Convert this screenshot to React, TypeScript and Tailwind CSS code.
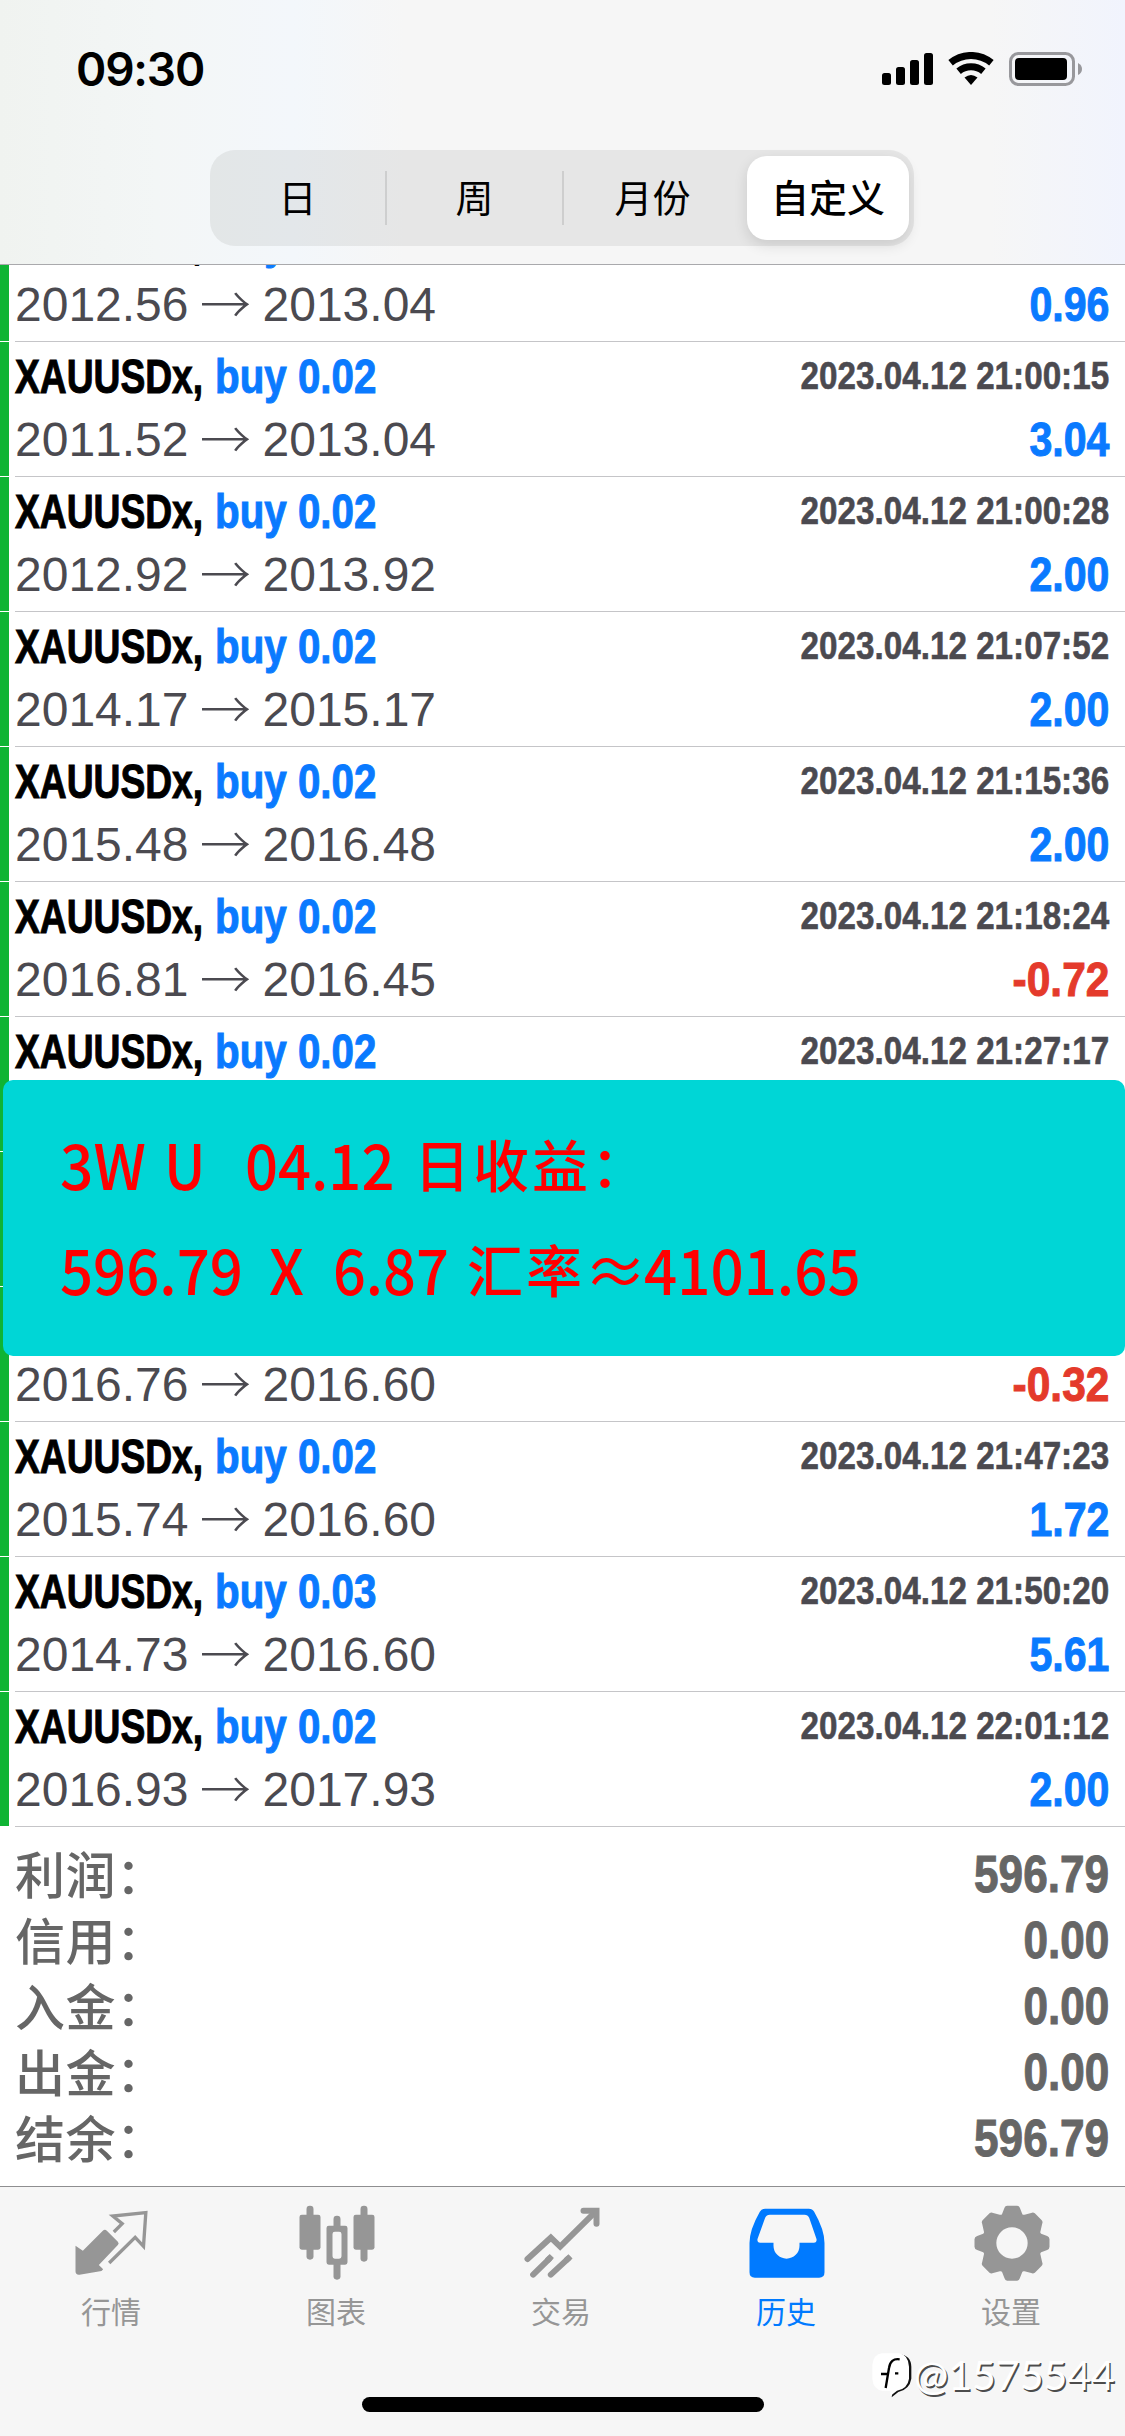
import type React from "react";

interface Deal {
  lots: string;
  time?: string;
  open?: string;
  close?: string;
  profit?: string;
}

const deals: Deal[] = [
  { lots: "0.02", open: "2012.56", close: "2013.04", profit: "0.96" },
  { lots: "0.02", time: "2023.04.12 21:00:15", open: "2011.52", close: "2013.04", profit: "3.04" },
  { lots: "0.02", time: "2023.04.12 21:00:28", open: "2012.92", close: "2013.92", profit: "2.00" },
  { lots: "0.02", time: "2023.04.12 21:07:52", open: "2014.17", close: "2015.17", profit: "2.00" },
  { lots: "0.02", time: "2023.04.12 21:15:36", open: "2015.48", close: "2016.48", profit: "2.00" },
  { lots: "0.02", time: "2023.04.12 21:18:24", open: "2016.81", close: "2016.45", profit: "-0.72" },
  { lots: "0.02", time: "2023.04.12 21:27:17" },
  { lots: "" },
  { lots: "", open: "2016.76", close: "2016.60", profit: "-0.32" },
  { lots: "0.02", time: "2023.04.12 21:47:23", open: "2015.74", close: "2016.60", profit: "1.72" },
  { lots: "0.03", time: "2023.04.12 21:50:20", open: "2014.73", close: "2016.60", profit: "5.61" },
  { lots: "0.02", time: "2023.04.12 22:01:12", open: "2016.93", close: "2017.93", profit: "2.00" },
];

const totals = [
  { label: "利润：", value: "596.79" },
  { label: "信用：", value: "0.00" },
  { label: "入金：", value: "0.00" },
  { label: "出金：", value: "0.00" },
  { label: "结余：", value: "596.79" },
];

const StatusBar: React.FC = () => (
  <div className="flex h-[150px] items-start justify-between pl-[76px] pr-[43px] pt-[41px]">
    <span className="font-['Inter',sans-serif] text-[46px] font-semibold leading-[56px] tracking-[-1.2px] text-black">
      09:30
    </span>
    <svg className="mt-[11px] h-[35px] w-[201px]" viewBox="0 0 201 35">
      <rect x="1" y="21" width="9" height="12" rx="2.5" />
      <rect x="15" y="15" width="9" height="18" rx="2.5" />
      <rect x="29" y="8" width="9" height="25" rx="2.5" />
      <rect x="43" y="1" width="9" height="32" rx="2.5" />
      <g fill="none" stroke="#000" strokeWidth="7">
        <path d="M69.6 10.8A32 32 0 0 1 110.4 10.8" />
        <path d="M77.6 19.2A19.5 19.5 0 0 1 102.4 19.2" />
      </g>
      <path d="M83.5 25.5Q90 20.5 96.5 25.5L90 33Z" />
      <rect x="129.5" y="1.5" width="63" height="31" rx="8" fill="none" stroke="#98989c" strokeWidth="3" />
      <rect x="134" y="6" width="52" height="22" rx="4" />
      <path d="M197 11q4 2 4 6t-4 6z" fill="#98989c" />
    </svg>
  </div>
);

const Segments: React.FC = () => (
  <div className="ml-[210px] flex h-24 w-[704px] items-center rounded-[25px] bg-[#767676]/12 font-['Noto_Sans_CJK_SC',sans-serif] text-[38px] leading-[56px] text-black">
    <div className="w-[175px] pb-1 text-center">日</div>
    <div className="h-[54px] w-[2px] bg-black/10" />
    <div className="w-[175px] pb-1 text-center">周</div>
    <div className="h-[54px] w-[2px] bg-black/10" />
    <div className="w-[183px] pb-1 pr-1.5 text-center">月份</div>
    <div className="flex h-[84px] w-[162px] items-center justify-center rounded-[20px] bg-white pb-1 font-medium shadow-[0_5px_14px_rgba(0,0,0,0.12)]">
      自定义
    </div>
  </div>
);

const DealRow: React.FC<{ deal: Deal }> = ({ deal }) => (
  <div className="flex h-[135px] shrink-0">
    <div className="w-[9px] border-b border-white bg-[#0fb434]" />
    <div className="ml-1.5 flex-1 border-b border-[#c5c5c8] pr-4 pt-[7px] whitespace-nowrap font-['Liberation_Sans',sans-serif] [font-kerning:none]">
      <div className="flex h-[63px] items-start">
        {deal.lots && (
          <div className="flex text-[48px] font-bold leading-[56px] [-webkit-text-stroke:1px]">
            <div className="w-[200px]">
              <span className="inline-block origin-left scale-x-[0.775] text-black">XAUUSDx,</span>
            </div>
            <span className="inline-block w-[170px] origin-left scale-x-[0.84] text-[#0a7aff]">buy {deal.lots}</span>
          </div>
        )}
        {deal.time && (
          <span className="ml-auto mt-[2px] inline-block origin-right scale-x-[0.852] text-[39px] font-bold leading-[50px] text-[#4b4a50] [-webkit-text-stroke:0.6px]">
            {deal.time}
          </span>
        )}
      </div>
      {deal.open && (
        <div className="flex h-14 items-start justify-between leading-[56px]">
          <div className="flex text-[48px] text-[#4b4a50]">
            <span>{deal.open}</span>
            <span className="w-[74px] text-center font-['Noto_Sans_CJK_SC',sans-serif] text-[51px] font-light leading-[50px]">
              →
            </span>
            <span>{deal.close}</span>
          </div>
          <span
            className={`inline-block origin-right text-[48px] font-bold [-webkit-text-stroke:1px] ${
              deal.profit?.startsWith("-") ? "scale-x-[0.885] text-[#e43a2b]" : "scale-x-[0.855] text-[#0a7aff]"
            }`}
          >
            {deal.profit}
          </span>
        </div>
      )}
    </div>
  </div>
);

const Banner: React.FC = () => (
  <div className="absolute left-[3px] top-[815px] h-[276px] w-[1122px] rounded-[10px] bg-[#00d6d6] pl-[57px] pt-[30px] font-['Noto_Sans_CJK_SC',sans-serif] text-[63px] font-medium leading-[105px] text-[#ff0000]">
    <div className="flex h-[105px] whitespace-nowrap">
      <span className="w-[104px] origin-left scale-x-[0.93]">3W</span>
      <span className="w-[81px] origin-left scale-x-[0.9]">U</span>
      <span className="w-[169px] origin-left scale-x-[0.92]">04.12</span>
      <span className="text-[56px] tracking-[3px]">日收益：</span>
    </div>
    <div className="flex h-[105px] whitespace-nowrap">
      <span className="w-[209px] origin-left scale-x-[0.922]">596.79</span>
      <span className="w-[64px] origin-left scale-x-[0.93]">X</span>
      <span className="w-[134px] origin-left scale-x-[0.915]">6.87</span>
      <span className="w-[117px] text-[56px] tracking-[3px]">汇率</span>
      <span className="w-[60px] font-normal tracking-[-2px]">≈</span>
      <span className="origin-left scale-x-[0.925]">4101.65</span>
    </div>
  </div>
);

const Totals: React.FC = () => (
  <div className="h-[359px] bg-white pl-[15px] pr-4 pt-3 text-[#666]">
    {totals.map((row) => (
      <div key={row.label} className="flex h-[66px] items-start justify-between leading-[66px]">
        <span className="font-['Noto_Sans_CJK_SC',sans-serif] text-[50px] font-medium tracking-[0.5px]">
          {row.label}
        </span>
        <span className="mt-[3px] inline-block origin-right scale-x-[0.865] font-['Liberation_Sans',sans-serif] text-[51px] font-bold [-webkit-text-stroke:1px]">
          {row.value}
        </span>
      </div>
    ))}
  </div>
);

const QuotesIcon: React.FC = () => (
  <svg className="h-20 w-20" viewBox="67.5 100 240 240" fill="currentColor">
    <path d="M75 228L97 243L157 183Q163 177 169 183L202 216Q207 221 202 226L145 286L158 299L153 304L87 315Q75 316 75 305Z" />
    <path
      d="M190 187L215 162L187 139L286 129L279 230L254 203L176 280"
      fill="none"
      stroke="currentColor"
      strokeWidth="10"
    />
  </svg>
);

const ChartIcon: React.FC = () => (
  <svg className="h-20 w-20" viewBox="742.5 100 240 240" fill="currentColor">
    <rect x="768" y="108" width="21" height="162" rx="10" />
    <rect x="747" y="135" width="63" height="105" rx="7" />
    <rect x="930" y="108" width="21" height="168" rx="10" />
    <rect x="909" y="135" width="63" height="105" rx="7" />
    <rect x="849" y="138" width="21" height="40" rx="10" />
    <rect x="849" y="270" width="21" height="60" rx="10" />
    <path
      fillRule="evenodd"
      d="M835 168H884Q891 168 891 175V278Q891 285 884 285H835Q828 285 828 278V175Q828 168 835 168ZM853 186Q846 186 846 193V260Q846 267 853 267H866Q873 267 873 260V193Q873 186 866 186Z"
    />
  </svg>
);

const TradeIcon: React.FC = () => (
  <svg
    className="h-20 w-20"
    viewBox="67.5 100 240 240"
    fill="none"
    stroke="currentColor"
    strokeWidth="18"
    strokeLinecap="round"
  >
    <path d="M81 268L151 204L179 231L286 125" />
    <path d="M249 123H288V162" />
    <path d="M98 315L147 267M151 315L203 267" />
    <path d="M140 273L154 259M196 273L210 260" strokeLinecap="butt" />
  </svg>
);

const HistoryIcon: React.FC = () => (
  <svg className="h-20 w-20" viewBox="742.5 100 240 240" fill="currentColor">
    <path
      fillRule="evenodd"
      d="M794 117H925Q936 117 941 126Q972 180 972 220V308Q972 324 956 324H763Q747 324 747 308V220Q747 180 778 126Q783 117 794 117ZM808 135Q798 135 794 144L771 208Q769 219 779 219H819V228A39 39 0 0 0 897 228V219H940Q950 219 948 208L926 144Q922 135 912 135Z"
    />
  </svg>
);

const SettingsIcon: React.FC = () => (
  <svg className="h-20 w-20" viewBox="397.5 100 240 240" fill="currentColor">
    <path
      fillRule="evenodd"
      d="M500 108H530Q536 108 538 114L545 132Q547 137 552 135L572 130Q578 127 583 131L603 151Q608 156 605 162L600 185Q598 189 602 192L620 199Q627 202 627 209V231Q627 238 620 241L602 248Q598 251 600 255L605 278Q608 284 603 289L583 309Q578 313 572 310L552 305Q547 303 545 308L538 326Q536 333 530 333H500Q494 333 492 326L485 308Q483 303 478 305L458 310Q452 313 447 309L427 289Q422 284 425 278L430 255Q432 251 428 248L410 241Q402 238 402 231V209Q402 202 410 199L428 192Q432 189 430 185L425 162Q422 156 427 151L447 131Q452 127 458 130L478 135Q483 137 485 132L492 114Q494 108 500 108ZM514.5 173A47 47 0 1 0 514.5 267A47 47 0 1 0 514.5 173Z"
    />
  </svg>
);

const tabs = [
  { label: "行情", icon: QuotesIcon },
  { label: "图表", icon: ChartIcon },
  { label: "交易", icon: TradeIcon },
  { label: "历史", icon: HistoryIcon, active: true },
  { label: "设置", icon: SettingsIcon },
];

const TabBar: React.FC = () => (
  <div className="relative flex h-[250px] flex-col items-center justify-between border-t border-[#8e8e90] bg-[#f6f6f6] pb-6">
    <div className="flex w-full pt-4">
      {tabs.map(({ label, icon: Icon, active }) => (
        <div
          key={label}
          className={`flex w-[225px] flex-col items-center ${active ? "text-[#007aff]" : "text-[#969696]"}`}
        >
          <Icon />
          <span className="mt-[5px] pr-[3px] font-['Noto_Sans_CJK_SC',sans-serif] text-[30px] leading-[44px]">
            {label}
          </span>
        </div>
      ))}
    </div>
    <div className="h-[15px] w-[402px] rounded-full bg-black" />
    {/* Author watermark */}
    <div className="absolute left-[871px] top-[165px] flex items-center">
      <svg className="h-[46px] w-[42px]" viewBox="0 0 126 138">
        <path d="M84 6Q120 10 121 44V80Q116 112 82 120L62 136L64 124Z" fill="#111" />
        <path d="M32 4H84Q112 8 114 44V80Q110 110 78 116L58 132L58 116H34Q6 112 4 80V40Q6 8 32 4Z" fill="#fff" />
        <path d="M86 22Q58 18 54 48L44 108M30 66H54M72 64H82" fill="none" stroke="#000" strokeWidth="7" />
      </svg>
      <span className="ml-px font-['Lato',sans-serif] text-[41px] leading-[46px] text-white [text-shadow:1.5px_1.5px_0.5px_rgba(0,0,0,0.7)]">
        @1575544
      </span>
    </div>
  </div>
);

const App: React.FC = () => (
  <div className="flex h-[2436px] w-[1125px] flex-col overflow-hidden bg-white">
    <header className="h-[265px] border-b border-[#a9a9ac] bg-[linear-gradient(90deg,#f0f3f0_0%,#f3f6f6_14%,#f3f7fb_26%,#f6f6f6_36%,#f6f6f6_88%,#f1f4fd_100%)]">
      <StatusBar />
      <Segments />
    </header>

    <main className="relative h-[1562px]">
      <div className="flex h-full flex-col justify-end overflow-hidden">
        {deals.map((deal, i) => (
          <DealRow key={i} deal={deal} />
        ))}
      </div>
      <Banner />
    </main>

    <Totals />
    <TabBar />
  </div>
);

export default App;
